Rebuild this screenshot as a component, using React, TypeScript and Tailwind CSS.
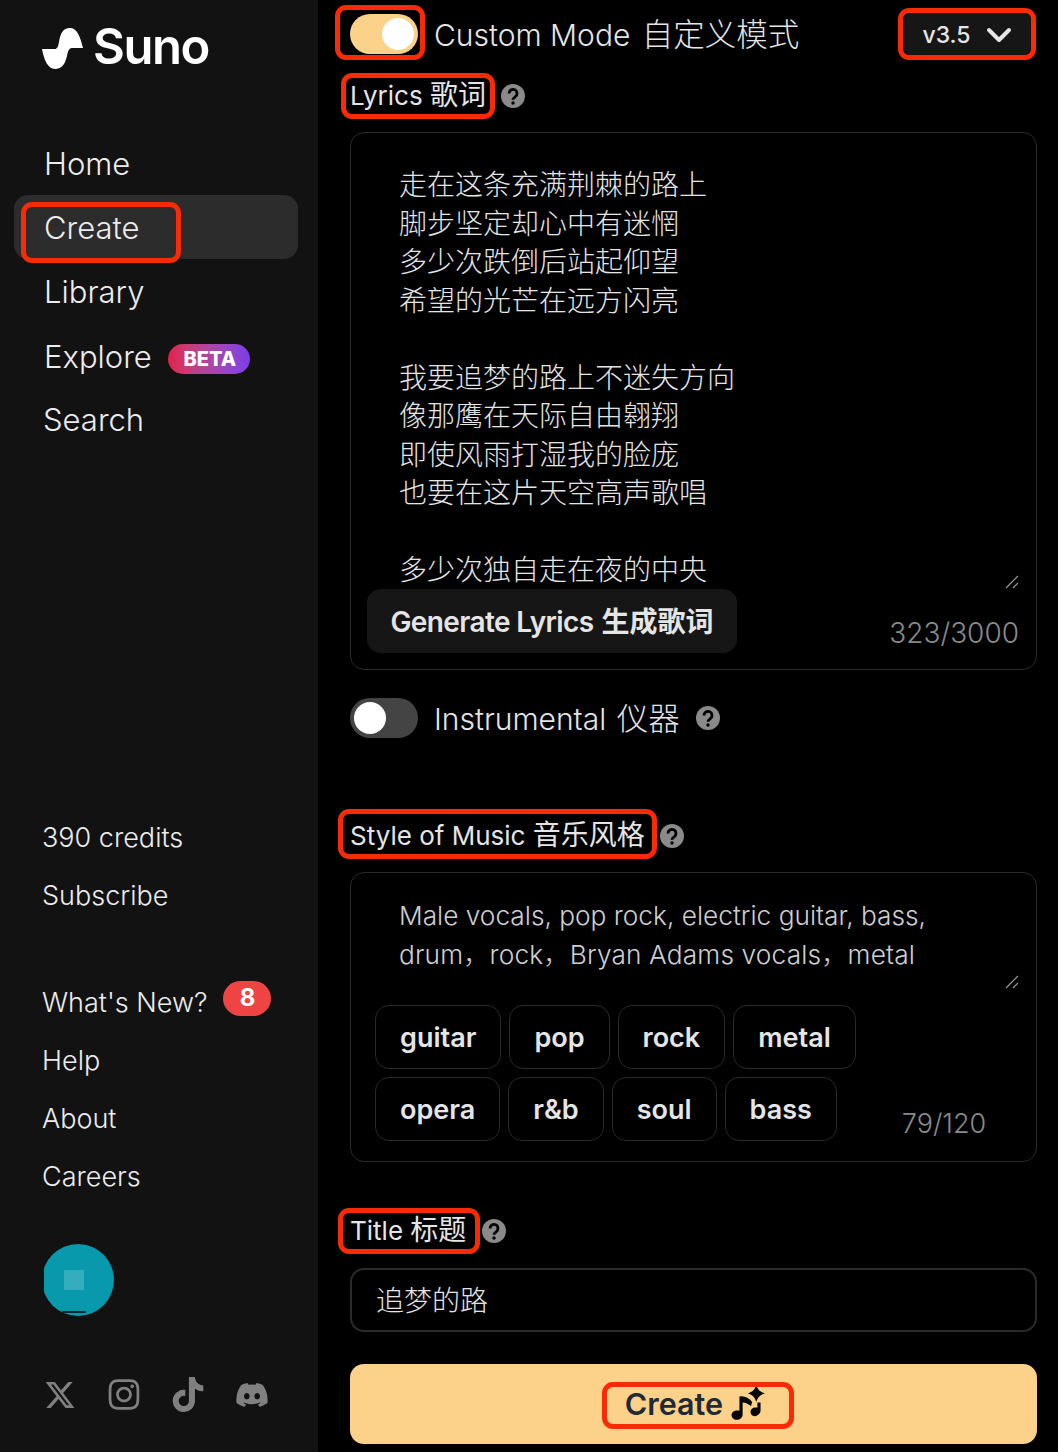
import type { ReactNode } from "react";
import { ChevronDown } from "lucide-react";
import { FaDiscord, FaInstagram, FaTiktok, FaXTwitter } from "react-icons/fa6";

const lyrics = [
  "走在这条充满荆棘的路上",
  "脚步坚定却心中有迷惘",
  "多少次跌倒后站起仰望",
  "希望的光芒在远方闪亮",
  "",
  "我要追梦的路上不迷失方向",
  "像那鹰在天际自由翱翔",
  "即使风雨打湿我的脸庞",
  "也要在这片天空高声歌唱",
  "",
  "多少次独自走在夜的中央",
];

const tagRows = [
  ["guitar", "pop", "rock", "metal"],
  ["opera", "r&b", "soul", "bass"],
];

const fontStack = "font-['Inter','Noto_Sans_CJK_SC',sans-serif]";

// red annotation drawn over the screenshot
function Marked({ className, children }: { className: string; children: ReactNode }) {
  return (
    <div className="relative">
      {children}
      <div className={`pointer-events-none absolute rounded-[11px] border-[5px] border-[#f92b06] ${className}`} />
    </div>
  );
}

function Help({ className = "" }: { className?: string }) {
  return (
    <svg width="24" height="24" viewBox="0 0 24 24" className={className}>
      <circle cx="12" cy="12" r="12" fill="#8a8a8a" />
      <path d="M8 9.5a4 4 0 1 1 6.3 3.2c-1.4 1-2.3 1.6-2.3 3" fill="none" stroke="#000" strokeWidth="2.8" />
      <circle cx="12" cy="19" r="1.7" fill="#000" />
    </svg>
  );
}

function Toggle({ on }: { on: boolean }) {
  return (
    <div
      className={`flex h-10 w-[68px] items-center rounded-full px-1 ${
        on ? "justify-end bg-[#fcd28a]" : "justify-start bg-[#444444]"
      }`}
    >
      <div className="h-8 w-8 rounded-full bg-white" />
    </div>
  );
}

function ResizeHandle() {
  return (
    <svg width="14" height="14" viewBox="0 0 14 14" className="text-[#999999]">
      <path d="M1 13 13 1M8 13l5-5" stroke="currentColor" strokeWidth="1.2" fill="none" />
    </svg>
  );
}

function SunoMark() {
  return (
    <svg width="41" height="41" viewBox="0 0 41 41" fill="white">
      <path d="M0 21 L13 21 C15 21 16 19 17 14 C18.5 5 21 0 28 0 C35 0 38 8 41 20 L30 20 C27 20 26 23 25 28 C23 36 20 41 13 41 C6 41 2 32 0 21Z" />
    </svg>
  );
}

function MusicSpark() {
  return (
    <svg width="38" height="38" viewBox="0 0 36 36" fill="#050505">
      <path d="M24 0 C25.5 4.5 27.5 6.5 32 8 C27.5 9.5 25.5 11.5 24 16 C22.5 11.5 20.5 9.5 16 8 C20.5 6.5 22.5 4.5 24 0Z" />
      <path d="M8 11 C12 10 17 12 20 16 L19 20 C16.5 18 13.5 16.5 11 16.5 L11 28 C11 31 8.5 33 5.5 33 C2.5 33 0.5 31 0.5 28.5 C0.5 25.5 4 23.5 8 24.5Z" />
      <path d="M25 16.5 L28 16.5 L28 24 C28 27 25.5 29.5 22.5 29.5 C20 29.5 18.5 27.5 18.5 25.5 C18.5 22.5 21.5 20.5 25 21.5Z" />
    </svg>
  );
}

function Sidebar() {
  return (
    <aside className="flex w-[318px] shrink-0 flex-col bg-[#121212] text-[#ececec]">
      <div className="ml-[42px] mt-[26px] flex h-[44px] items-center gap-[10px]">
        <SunoMark />
        <span className="pb-[3px] text-[49px] font-semibold leading-none tracking-[-0.03em] text-white">Suno</span>
      </div>

      <nav className="mt-[61px] flex flex-col text-[31px] font-light leading-[66px]">
        <div className="h-16 pl-[44px]">Home</div>
        <div className="ml-[14px] mr-[20px] h-16 rounded-[14px] bg-[#2c2c2c] pl-[30px]">
          <Marked className="-bottom-[2px] left-[-23px] top-[7px] w-[160px]">
            <span>Create</span>
          </Marked>
        </div>
        <div className="h-16 pl-[44px]">Library</div>
        <div className="flex h-16 items-center gap-4 pl-[44px] leading-[64px]">
          <span className="mt-[3px]">Explore</span>
          <span className="mt-[8px] flex h-[30px] w-[82px] items-center justify-center rounded-full bg-gradient-to-r from-[#e11d48] to-[#7c3aed] pl-[2px] text-[20px] font-extrabold leading-none text-white">
            BETA
          </span>
        </div>
        <div className="h-16 pl-[43px]">Search</div>
      </nav>

      <div className="mt-[358px] flex flex-col pl-[42px] text-[27px] font-light leading-[58px]">
        <div>390 credits</div>
        <div>Subscribe</div>
        <div className="mt-[49px] flex items-center gap-4">
          What's New?
          <span className="-mt-[10px] flex h-[35px] w-12 items-center justify-center rounded-full bg-[#ef4444] text-[24px] font-bold leading-none text-white">
            8
          </span>
        </div>
        <div>Help</div>
        <div>About</div>
        <div>Careers</div>
      </div>

      <div className="ml-[44px] mt-[38px] flex h-[72px] w-[70px] justify-end overflow-hidden">
        <div className="relative flex h-[72px] w-[72px] shrink-0 items-center justify-center rounded-full bg-[#0899ad]">
          <div className="mr-[8px] h-5 w-5 bg-[#36adbd]" />
          <div className="absolute bottom-[3px] left-[20px] h-[2px] w-6 rounded-full bg-[#0a2a30]" />
        </div>
      </div>

      <div className="ml-[44px] mt-[61px] flex items-center gap-8 text-[#808080]">
        <FaXTwitter className="h-8 w-8" />
        <FaInstagram className="h-[35px] w-8" />
        <FaTiktok className="h-[35px] w-8" />
        <FaDiscord className="-ml-[1px] h-[34px] w-[34px]" />
      </div>
    </aside>
  );
}

// latin and CJK parts have different sizes in the reference
function Label({ latin, cjk }: { latin: string; cjk: string }) {
  return (
    <span className="block h-9 whitespace-nowrap text-[26px] font-normal leading-[34px]">
      {latin} <span className="text-[28px]">{cjk}</span>
    </span>
  );
}

function Tag({ label }: { label: string }) {
  return (
    <div className="flex h-16 items-center rounded-[14px] border border-[#2a2a2a] px-6 pt-[2px] text-[27px] font-semibold text-[#e5e5e5]">
      {label}
    </div>
  );
}

export default function App() {
  return (
    <div className={`flex h-[1452px] w-[1058px] overflow-hidden bg-black ${fontStack}`}>
      <Sidebar />

      <main className="flex min-w-0 flex-1 flex-col pl-8 pr-[21px] pt-[14px] text-[#e5e5e5]">
        <div className="flex h-10 items-center">
          <Marked className="-bottom-[6px] -left-[15px] -right-[7px] -top-[9px]">
            <Toggle on />
          </Marked>
          <span className="ml-4 pt-[2px] text-[30px] font-light">
            Custom Mode <span className="ml-[3px] text-[31.5px]">自定义模式</span>
          </span>
          <div className="ml-auto mr-[6px]">
            <Marked className="-inset-y-[5px] -left-[6px] -right-[5px]">
              <div className="flex h-[42px] w-[127px] items-center justify-center gap-[8px] rounded-[8px] bg-[#161616] pl-[6px] text-[23px] font-medium text-[#e5e5e5]">
                <span className="mt-[2px]">v3.5</span>
                <ChevronDown className="mt-[1px] h-10 w-10" strokeWidth={2.4} />
              </div>
            </Marked>
          </div>
        </div>

        <div className="mt-[24px] flex h-[36px] items-center">
          <Marked className="-inset-x-[9px] -inset-y-[5px]">
            <Label latin="Lyrics" cjk="歌词" />
          </Marked>
          <Help className="ml-[15px]" />
        </div>

        <section className="mt-[18px] flex h-[538px] flex-col rounded-[14px] border border-[#2a2a2a] pl-4 pr-[17px]">
          <div className="h-[456px] whitespace-pre-line pl-[32px] pt-[33px] text-[28px] font-light leading-[38.5px]">
            {lyrics.join("\n")}
          </div>
          <div className="flex items-start justify-between">
            <button className="flex h-16 w-[370px] items-center justify-center rounded-[14px] bg-[#161616] pt-[1px] text-[28px] font-semibold text-[#e5e5e5]">
              <span className="tracking-[-0.6px]">Generate Lyrics</span>
              <span className="ml-2">生成歌词</span>
            </button>
            <div className="flex flex-col items-end gap-[26px]">
              <div className="-mt-[14px]">
                <ResizeHandle />
              </div>
              <span className="text-[28px] font-light leading-[36px] text-[#8a8a8a]">323/3000</span>
            </div>
          </div>
        </section>

        <div className="mt-[28px] flex h-10 items-center">
          <Toggle on={false} />
          <span className="ml-4 pt-[2px] text-[30px] font-light">
            Instrumental <span className="ml-[2px] text-[31.5px]">仪器</span>
          </span>
          <Help className="ml-4" />
        </div>

        <div className="mt-[80px] flex h-[36px] items-center">
          <Marked className="-bottom-[5px] -left-[12px] -right-[12px] -top-[9px]">
            <Label latin="Style of Music" cjk="音乐风格" />
          </Marked>
          <Help className="ml-[15px]" />
        </div>

        <section className="mt-[18px] flex h-[290px] flex-col rounded-[14px] border border-[#2a2a2a] pl-6 pr-[17px]">
          <div className="pl-[24px] pt-[23px] text-[26.25px] font-light leading-[39px] text-[#cfcfcf]">
            <div>Male vocals, pop rock, electric guitar, bass,</div>
            <div className="tracking-[0.15px]">drum，rock，Bryan Adams vocals，metal</div>
          </div>
          <div className="mt-[1px] flex justify-end">
            <ResizeHandle />
          </div>
          <div className="mt-[16px] flex flex-col gap-2">
            {tagRows.map((row, i) => (
              <div key={i} className="flex items-end gap-2">
                {row.map((t) => (
                  <Tag key={t} label={t} />
                ))}
                {i === 1 && (
                  <span className="-mb-[1px] ml-[57px] text-[27px] font-light leading-[36px] text-[#8a8a8a]">79/120</span>
                )}
              </div>
            ))}
          </div>
        </section>

        <div className="mt-[51px] flex h-[36px] items-center">
          <Marked className="-left-[12px] -right-[14px] -inset-y-[5px]">
            <Label latin="Title" cjk="标题" />
          </Marked>
          <Help className="ml-4" />
        </div>

        <div className="mt-[19px] flex h-16 items-center rounded-[14px] border-2 border-[#2a2a2a] pl-6 pt-[2px] text-[28px] font-light">
          追梦的路
        </div>

        <button className="mt-8 flex h-20 items-center justify-center rounded-[14px] bg-[#fcd28a] pl-[7px]">
          <Marked className="-bottom-[6px] -left-[23px] -right-[25px] -top-[3px]">
            <span className="flex items-center gap-2 text-[30.5px] font-semibold leading-[38px] text-[#1f2937]">
              Create
              <MusicSpark />
            </span>
          </Marked>
        </button>
      </main>
    </div>
  );
}
